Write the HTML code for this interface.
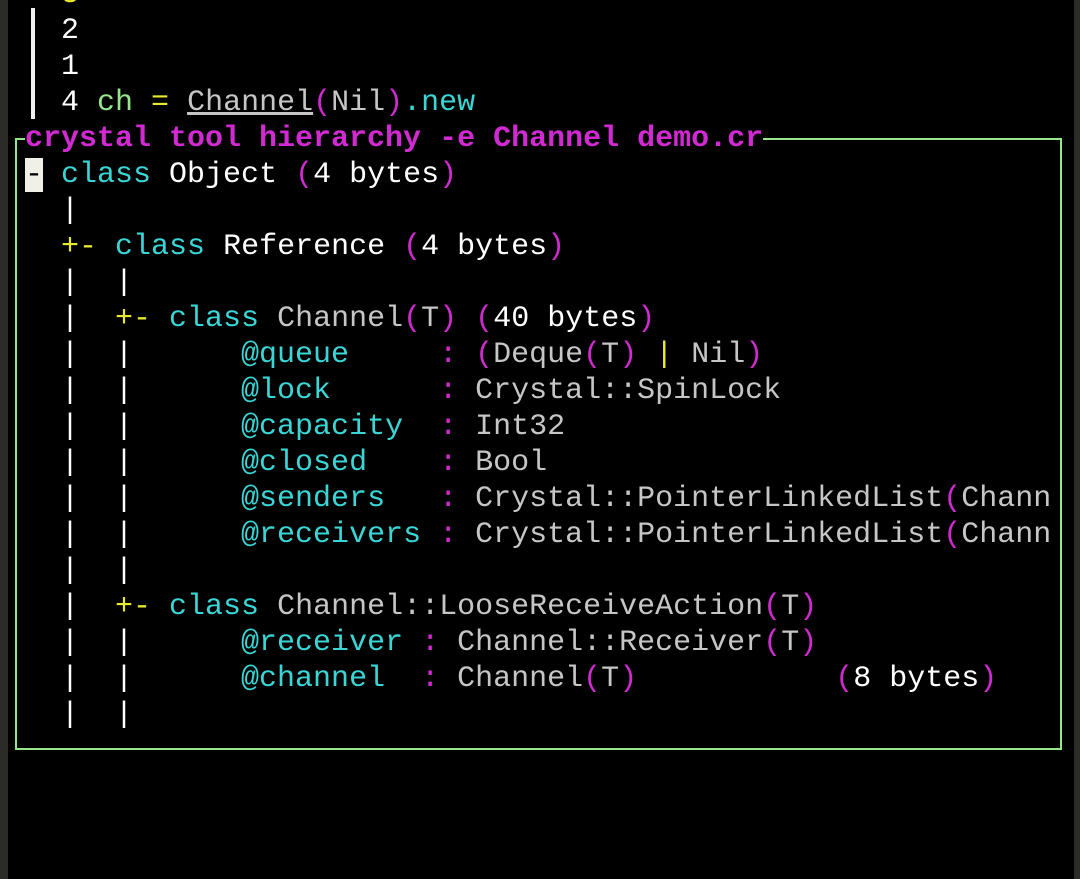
<!DOCTYPE html>
<html><head><meta charset="utf-8"><style>
html,body{margin:0;padding:0;background:#000;width:1080px;height:879px;overflow:hidden;position:relative}
.l{position:absolute;left:25px;height:36px;line-height:36px;margin-top:2px;font-family:"Liberation Mono",monospace;font-size:30px;white-space:pre;color:#fff;width:1025px;overflow:hidden}
.m{color:#d22ad2}.c{color:#3ad6d6}.y{color:#e8e830}.g{color:#c6c6c6}.w{color:#fff}.gr{color:#96e68c}
.b{font-weight:bold}
.inv{background:#f0f0e8;color:#000}
</style></head><body>
<div style="position:absolute;left:0;top:0;width:8px;height:879px;background:#2b2b27"></div>
<div style="position:absolute;right:0;top:0;width:6px;height:879px;background:#2b2b27"></div>
<div style="position:absolute;left:31px;top:8px;width:4px;height:111px;background:#f0f0f0"></div>
<div style="position:absolute;left:15px;top:138px;width:1043px;height:608px;border:2px solid #96e68c"></div>
<div class="l y" style="top:-25px;left:61px">3</div>
<div class="l" style="top:11px;left:61px">2</div>
<div class="l" style="top:47px;left:61px">1</div>
<div class="l" style="top:83px;left:61px">4 <span class="gr">ch</span> <span class="y">=</span> <span class="g" style="text-decoration:underline">Channel</span><span class="m">(</span><span class="g">Nil</span><span class="m">)</span><span class="c">.new</span></div>
<div class="l m b" style="top:119px;width:auto;background:#000">crystal tool hierarchy -e Channel demo.cr</div>
<div class="l" style="top:155px"><span class="inv">-</span> <span class="c">class</span> Object <span class="m">(</span>4 bytes<span class="m">)</span></div>
<div class="l" style="top:191px">  |</div>
<div class="l" style="top:227px">  <span class="y">+-</span> <span class="c">class</span> Reference <span class="m">(</span>4 bytes<span class="m">)</span></div>
<div class="l" style="top:263px">  |  |</div>
<div class="l" style="top:299px">  |  <span class="y">+-</span> <span class="c">class</span> <span class="g">Channel</span><span class="m">(</span><span class="g">T</span><span class="m">)</span> <span class="m">(</span>40 bytes<span class="m">)</span></div>
<div class="l" style="top:335px">  |  |      <span class="c">@queue    </span> <span class="m">:</span> <span class="m">(</span><span class="g">Deque</span><span class="m">(</span><span class="g">T</span><span class="m">)</span> <span class="y">|</span> <span class="g">Nil</span><span class="m">)</span></div>
<div class="l" style="top:371px">  |  |      <span class="c">@lock     </span> <span class="m">:</span> <span class="g">Crystal::SpinLock</span></div>
<div class="l" style="top:407px">  |  |      <span class="c">@capacity </span> <span class="m">:</span> <span class="g">Int32</span></div>
<div class="l" style="top:443px">  |  |      <span class="c">@closed   </span> <span class="m">:</span> <span class="g">Bool</span></div>
<div class="l" style="top:479px">  |  |      <span class="c">@senders  </span> <span class="m">:</span> <span class="g">Crystal::PointerLinkedList</span><span class="m">(</span><span class="g">Chann</span></div>
<div class="l" style="top:515px">  |  |      <span class="c">@receivers</span> <span class="m">:</span> <span class="g">Crystal::PointerLinkedList</span><span class="m">(</span><span class="g">Chann</span></div>
<div class="l" style="top:551px">  |  |</div>
<div class="l" style="top:587px">  |  <span class="y">+-</span> <span class="c">class</span> <span class="g">Channel::LooseReceiveAction</span><span class="m">(</span><span class="g">T</span><span class="m">)</span></div>
<div class="l" style="top:623px">  |  |      <span class="c">@receiver</span> <span class="m">:</span> <span class="g">Channel::Receiver</span><span class="m">(</span><span class="g">T</span><span class="m">)</span></div>
<div class="l" style="top:659px">  |  |      <span class="c">@channel </span> <span class="m">:</span> <span class="g">Channel</span><span class="m">(</span><span class="g">T</span><span class="m">)</span>           <span class="m">(</span>8 bytes<span class="m">)</span></div>
<div class="l" style="top:695px">  |  |</div>
</body></html>
